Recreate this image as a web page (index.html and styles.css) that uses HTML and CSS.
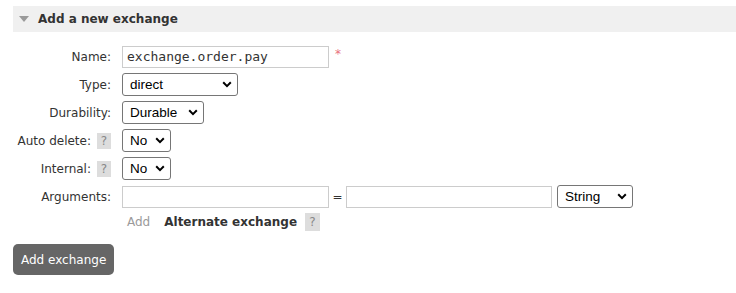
FILE: index.html
```html
<!DOCTYPE html>
<html lang="en">
<head>
  <meta charset="UTF-8">
  <title>Add a new exchange</title>
  <link rel="stylesheet" href="styles.css">
</head>
<body class="page">
  <div class="section">
    <h2 class="section__title"><span class="section__arrow"></span>Add a new exchange</h2>
  </div>

  <form class="form">
    <label class="form__label" for="name">Name:</label>
    <div class="form__control">
      <input class="form__input" id="name" type="text" value="exchange.order.pay">
      <span class="form__mandatory">*</span>
    </div>

    <label class="form__label" for="type">Type:</label>
    <div class="form__control">
      <select class="form__select form__select--type" id="type">
        <option>direct</option>
        <option>fanout</option>
        <option>headers</option>
        <option>topic</option>
      </select>
    </div>

    <label class="form__label" for="durability">Durability:</label>
    <div class="form__control">
      <select class="form__select form__select--durable" id="durability">
        <option>Durable</option>
        <option>Transient</option>
      </select>
    </div>

    <label class="form__label" for="auto-delete">Auto delete: <span class="help">?</span></label>
    <div class="form__control">
      <select class="form__select form__select--bool" id="auto-delete">
        <option>No</option>
        <option>Yes</option>
      </select>
    </div>

    <label class="form__label" for="internal">Internal: <span class="help">?</span></label>
    <div class="form__control">
      <select class="form__select form__select--bool" id="internal">
        <option>No</option>
        <option>Yes</option>
      </select>
    </div>

    <label class="form__label" for="arg-key">Arguments:</label>
    <div class="form__control form__control--args">
      <input class="form__input" id="arg-key" type="text">
      <span class="form__equals">=</span>
      <input class="form__input form__input--value" type="text">
      <select class="form__select form__select--kind">
        <option>String</option>
        <option>Number</option>
        <option>Boolean</option>
        <option>List</option>
      </select>
    </div>

    <div class="form__control form__control--extra">
      <span class="form__add">Add</span>
      <span class="form__shortcut">Alternate exchange</span>
      <span class="help help--tall">?</span>
    </div>
  </form>

  <button class="button" type="button">Add exchange</button>
</body>
</html>
```

FILE: styles.css
```css
*, *::before, *::after {
  box-sizing: border-box;
}

.page {
  margin: 0;
  padding: 6px 0 0 13px;
  font-family: "DejaVu Sans", Verdana, sans-serif;
  font-size: 12px;
  color: #484848;
  background: #fff;
}

.section {
  background: #f0f0f0;
  height: 26px;
}

.section__title {
  margin: 0;
  height: 26px;
  padding-left: 6px;
  display: flex;
  align-items: center;
  gap: 9px;
  font-size: 12px;
  font-weight: bold;
  color: #333;
}

.section__arrow {
  width: 0;
  height: 0;
  border-left: 5.5px solid transparent;
  border-right: 5.5px solid transparent;
  border-top: 6px solid #9a9a9a;
}

.form {
  margin-top: 13px;
  display: grid;
  grid-template-columns: 98px 1fr;
  column-gap: 11px;
  row-gap: 5px;
  grid-auto-rows: 23px;
}

.form__label {
  display: flex;
  align-items: center;
  justify-content: flex-end;
  gap: 6px;
  color: #333;
  white-space: nowrap;
}

.form__control {
  display: flex;
  align-items: center;
}

.form__control--extra {
  grid-column: 2;
  height: 18px;
}

.form__input {
  width: 207px;
  height: 22px;
  border: 1px solid #ccc;
  padding: 0 4px;
  font-family: "DejaVu Sans Mono", monospace;
  font-size: 13px;
  color: #333;
  outline: none;
}

.form__input--value {
  width: 206px;
}

.form__mandatory {
  margin-left: 6px;
  color: #e8707c;
  font-size: 12px;
  align-self: flex-start;
  margin-top: 2px;
}

.form__equals {
  width: 17px;
  text-align: center;
  color: #333;
}

.form__select {
  appearance: none;
  height: 23px;
  border: 1px solid #767676;
  border-radius: 3px;
  padding: 0 0 0 7px;
  font-family: "Liberation Sans", Arial, sans-serif;
  font-size: 13.5px;
  color: #000;
  background: #fff url("data:image/svg+xml,%3Csvg xmlns='http://www.w3.org/2000/svg' width='10' height='7' viewBox='0 0 10 7'%3E%3Cpath d='M1.2 1.3 5 5.1 8.8 1.3' fill='none' stroke='%23000' stroke-width='2'/%3E%3C/svg%3E") no-repeat right 5px center;
}

.form__select--type {
  width: 116px;
}

.form__select--durable {
  width: 82px;
}

.form__select--bool {
  width: 49px;
}

.form__select--kind {
  width: 76px;
  margin-left: 5px;
}

.form__add {
  margin-left: 5px;
  color: #9a9a9a;
}

.form__shortcut {
  margin-left: 14px;
  font-weight: bold;
  color: #333;
}

.help {
  display: inline-flex;
  align-items: center;
  justify-content: center;
  width: 14px;
  height: 16px;
  background: #ddd;
  color: #888;
  font-weight: normal;
  font-size: 12px;
}

.help--tall {
  width: 15px;
  height: 18px;
  margin-left: 8px;
}

.button {
  margin-top: 8px;
  height: 31px;
  padding: 0 8px;
  border: 0;
  border-radius: 5px;
  background: #666;
  color: #fff;
  font-family: "DejaVu Sans", Verdana, sans-serif;
  font-size: 12px;
  cursor: pointer;
}
```
